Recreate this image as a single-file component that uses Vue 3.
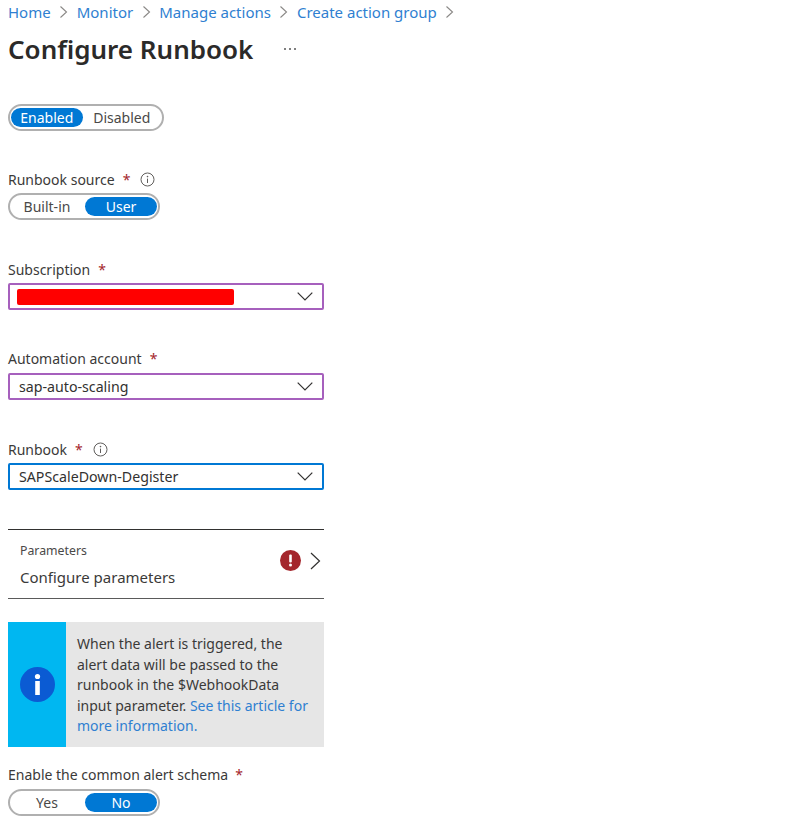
<script setup>
const crumbs = ['Home', 'Monitor', 'Manage actions', 'Create action group']
</script>

<template>
  <div class="page">
    <nav class="crumbs">
      <template v-for="c in crumbs" :key="c">
        <a class="crumb">{{ c }}</a>
        <svg class="sep" width="9" height="14" viewBox="0 0 9 14"><path d="M1.5 1.5 7.5 7 1.5 12.5" fill="none" stroke="#8a8886" stroke-width="1.1" /></svg>
      </template>
    </nav>
    <div class="title-row">
      <h1 class="title">Configure Runbook</h1>
      <span class="more">
        <i></i><i></i><i></i>
      </span>
    </div>

    <div class="pill pill-enabled">
      <span class="opt on w-enabled">Enabled</span>
      <span class="opt w-disabled">Disabled</span>
    </div>

    <div class="label source-label">
      <span>Runbook source</span><span class="req">*</span>
      <svg class="info" width="15" height="15" viewBox="0 0 15 15"><circle cx="7.5" cy="7.5" r="6.5" fill="none" stroke="#605e5c" /><path d="M7.5 6.6v4.4" stroke="#605e5c" /><circle cx="7.5" cy="4.6" r=".8" fill="#605e5c" /></svg>
    </div>
    <div class="pill">
      <span class="opt half">Built-in</span>
      <span class="opt half on">User</span>
    </div>

    <div class="label sub-label"><span>Subscription</span><span class="req">*</span></div>
    <div class="select purple">
      <span class="redact"></span>
      <svg class="chev" width="16" height="9" viewBox="0 0 16 9"><path d="M.7.7 8 8l7.3-7.3" fill="none" stroke="#323130" stroke-width="1.2" /></svg>
    </div>

    <div class="label auto-label"><span>Automation account</span><span class="req">*</span></div>
    <div class="select purple">
      <span class="value">sap-auto-scaling</span>
      <svg class="chev" width="16" height="9" viewBox="0 0 16 9"><path d="M.7.7 8 8l7.3-7.3" fill="none" stroke="#323130" stroke-width="1.2" /></svg>
    </div>

    <div class="label rb-label">
      <span>Runbook</span><span class="req">*</span>
      <svg class="info" width="15" height="15" viewBox="0 0 15 15"><circle cx="7.5" cy="7.5" r="6.5" fill="none" stroke="#605e5c" /><path d="M7.5 6.6v4.4" stroke="#605e5c" /><circle cx="7.5" cy="4.6" r=".8" fill="#605e5c" /></svg>
    </div>
    <div class="select blue">
      <span class="value">SAPScaleDown-Degister</span>
      <svg class="chev" width="16" height="9" viewBox="0 0 16 9"><path d="M.7.7 8 8l7.3-7.3" fill="none" stroke="#323130" stroke-width="1.2" /></svg>
    </div>

    <div class="params">
      <div class="params-text">
        <div class="params-title">Parameters</div>
        <div class="params-value">Configure parameters</div>
      </div>
      <svg class="err" width="21" height="21" viewBox="0 0 21 21"><circle cx="10.5" cy="10.5" r="10.5" fill="#a4262c" /><rect x="9.2" y="4.5" width="2.6" height="8" rx="1" fill="#fff" /><circle cx="10.5" cy="15" r="1.5" fill="#fff" /></svg>
      <svg class="go" width="11" height="18" viewBox="0 0 11 18"><path d="M1 1l8.5 8L1 17" fill="none" stroke="#323130" stroke-width="1.2" /></svg>
    </div>

    <div class="banner">
      <div class="strip">
        <svg width="35" height="35" viewBox="0 0 35 35"><circle cx="17.5" cy="17.5" r="17.5" fill="#0b5bd3" /><circle cx="17.5" cy="9.5" r="2.6" fill="#fff" /><rect x="15.2" y="14" width="4.6" height="14" fill="#fff" /></svg>
      </div>
      <p class="msg">When the alert is triggered, the alert data will be passed to the runbook in the $WebhookData input parameter. <a class="link">See this article for more information.</a></p>
    </div>

    <div class="label schema-label"><span>Enable the common alert schema</span><span class="req">*</span></div>
    <div class="pill">
      <span class="opt half">Yes</span>
      <span class="opt half on">No</span>
    </div>
  </div>
</template>

<style>
html, body { background: #fff; overflow: hidden; }
</style>

<style scoped>
.page {
  width: 812px;
  height: 818px;
  box-sizing: border-box;
  padding: 0 0 0 8px;
  overflow: hidden;
  font-family: "Noto Sans", "Open Sans", sans-serif;
  font-size: 14px;
  color: #323130;
  background: #fff;
}
.crumbs {
  display: flex;
  align-items: center;
  height: 24px;
  gap: 8.5px;
}
.crumb { color: #2f7fd1; font-size: 15px; }
.sep { flex: none; }
.title-row {
  display: flex;
  align-items: center;
  height: 50px;
}
.title {
  margin: 0;
  font-size: 26px;
  font-weight: 600;
  color: #2b2a29;
  line-height: 50px;
}
.more { display: flex; gap: 3px; margin-left: 31px; }
.more i { width: 2px; height: 2px; background: #555; border-radius: 50%; }
.pill {
  display: flex;
  align-items: center;
  box-sizing: border-box;
  width: 152px;
  height: 27px;
  padding: 0 1px;
  border: 2px solid #b0b0b0;
  border-radius: 14px;
}
.pill-enabled { width: 156px; margin-top: 30px; }
.opt {
  display: flex;
  align-items: center;
  justify-content: center;
  height: 19px;
  border-radius: 10px;
  font-size: 14px;
  color: #4a4948;
}
.opt.on { background: #0078d4; color: #fff; }
.half { width: 72px; }
.half.on { margin-left: 2px; }
.w-enabled { width: 72px; }
.w-disabled { width: 79px; }
.label {
  display: flex;
  align-items: center;
  height: 20px;
  font-size: 14px;
  color: #3b3a39;
  white-space: nowrap;
}
.req { color: #a4262c; margin-left: 8px; }
.info { margin-left: 10px; }
.source-label { margin-top: 38px; margin-bottom: 4px; }
.sub-label { margin-top: 39px; margin-bottom: 4px; }
.auto-label { margin-top: 38px; margin-bottom: 5px; }
.rb-label { margin-top: 39px; margin-bottom: 4px; }
.schema-label .req { margin-left: 7px; }
.select {
  display: flex;
  align-items: center;
  box-sizing: border-box;
  width: 316px;
  height: 27px;
  padding: 0 9px;
  border-radius: 2px;
  justify-content: space-between;
}
.purple { border: 2px solid #a660bd; }
.blue { border: 2px solid #0078d4; }
.value { font-size: 14.2px; color: #323130; }
.redact {
  width: 217px;
  height: 16px;
  margin-left: -2px;
  background: #ff0000;
  border-radius: 2px;
}
.params {
  display: flex;
  align-items: center;
  box-sizing: border-box;
  width: 316px;
  height: 70px;
  margin-top: 39px;
  padding: 0 3px 0 12px;
  border-top: 1px solid #323130;
  border-bottom: 1px solid #5a5a5a;
}
.params-text { flex: 1; margin-top: 2px; }
.params-title { font-size: 12.3px; color: #4a4948; line-height: 16px; margin-bottom: 8px; }
.params-value { font-size: 15px; color: #3b3a39; line-height: 20px; }
.err { margin-bottom: 7px; }
.go { margin-left: 9px; margin-bottom: 7px; }
.banner {
  display: flex;
  width: 316px;
  height: 125px;
  margin-top: 23px;
  background: #e6e6e6;
}
.strip {
  display: flex;
  align-items: center;
  justify-content: center;
  flex: none;
  width: 58px;
  background: #00b7f1;
}
.msg {
  margin: 0;
  padding: 12px 8px 0 11px;
  font-size: 14px;
  line-height: 20.5px;
  color: #3b3a39;
}
.link { color: #2f7fd1; }
.schema-label { margin-top: 17px; margin-bottom: 5px; }
</style>
